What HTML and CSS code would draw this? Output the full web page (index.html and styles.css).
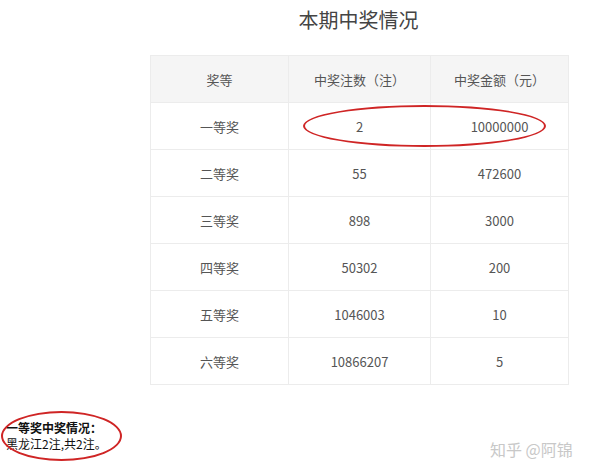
FILE: index.html
```html
<!DOCTYPE html>
<html lang="zh">
<head>
<meta charset="utf-8">
<link rel="stylesheet" href="styles.css">
</head>
<body>
<div class="page">
  <h1 class="title">本期中奖情况</h1>
  <table class="prize">
    <thead>
      <tr><th>奖等</th><th>中奖注数（注）</th><th>中奖金额（元）</th></tr>
    </thead>
    <tbody>
      <tr><td>一等奖</td><td>2</td><td>10000000</td></tr>
      <tr><td>二等奖</td><td>55</td><td>472600</td></tr>
      <tr><td>三等奖</td><td>898</td><td>3000</td></tr>
      <tr><td>四等奖</td><td>50302</td><td>200</td></tr>
      <tr><td>五等奖</td><td>1046003</td><td>10</td></tr>
      <tr><td>六等奖</td><td>10866207</td><td>5</td></tr>
    </tbody>
  </table>
  <div class="note">
    <div class="note-title">一等奖中奖情况：</div>
    <div>黑龙江2注,共2注。</div>
  </div>
  <div class="ring ring-top"></div>
  <div class="ring ring-note"></div>
  <div class="watermark">知乎 @阿锦</div>
</div>
</body>
</html>
```
FILE: styles.css
```css
html, body {
  margin: 0;
  padding: 0;
  background: #fff;
}
.page {
  position: relative;
  width: 600px;
  height: 473px;
  overflow: hidden;
  font-family: "Noto Sans CJK SC", "Noto Sans", sans-serif;
}
.title {
  margin: 6px 0 0 150px;
  width: 417px;
  text-align: center;
  font-size: 20px;
  line-height: 28px;
  font-weight: normal;
  color: #444;
}
.prize {
  margin: 21px 0 0 150px;
  border-collapse: collapse;
  font-size: 13px;
  color: #555;
  table-layout: fixed;
  width: 418px;
}
.prize th, .prize td {
  border: 1px solid #ececec;
  height: 46px;
  padding: 0;
  text-align: center;
  font-weight: normal;
}
.prize th { background: #f5f5f5; }
.prize th:nth-child(1) { width: 137px; }
.prize th:nth-child(2) { width: 141px; }
.prize th:nth-child(3) { width: 137px; }
.note {
  margin: 35px 0 0 6px;
  font-size: 12px;
  line-height: 16px;
  color: #111;
}
.note-title { font-weight: bold; }
.ring {
  position: absolute;
  border: 2px solid #cf2525;
  border-radius: 50%;
  box-sizing: border-box;
}
.ring-top {
  left: 303px;
  top: 105px;
  width: 243px;
  height: 42px;
}
.ring-note {
  left: 1px;
  top: 411px;
  width: 121px;
  height: 50px;
}
.watermark {
  position: absolute;
  left: 490px;
  top: 439px;
  font-size: 16px;
  line-height: 20px;
  color: #c8c8c8;
  white-space: nowrap;
}
```
